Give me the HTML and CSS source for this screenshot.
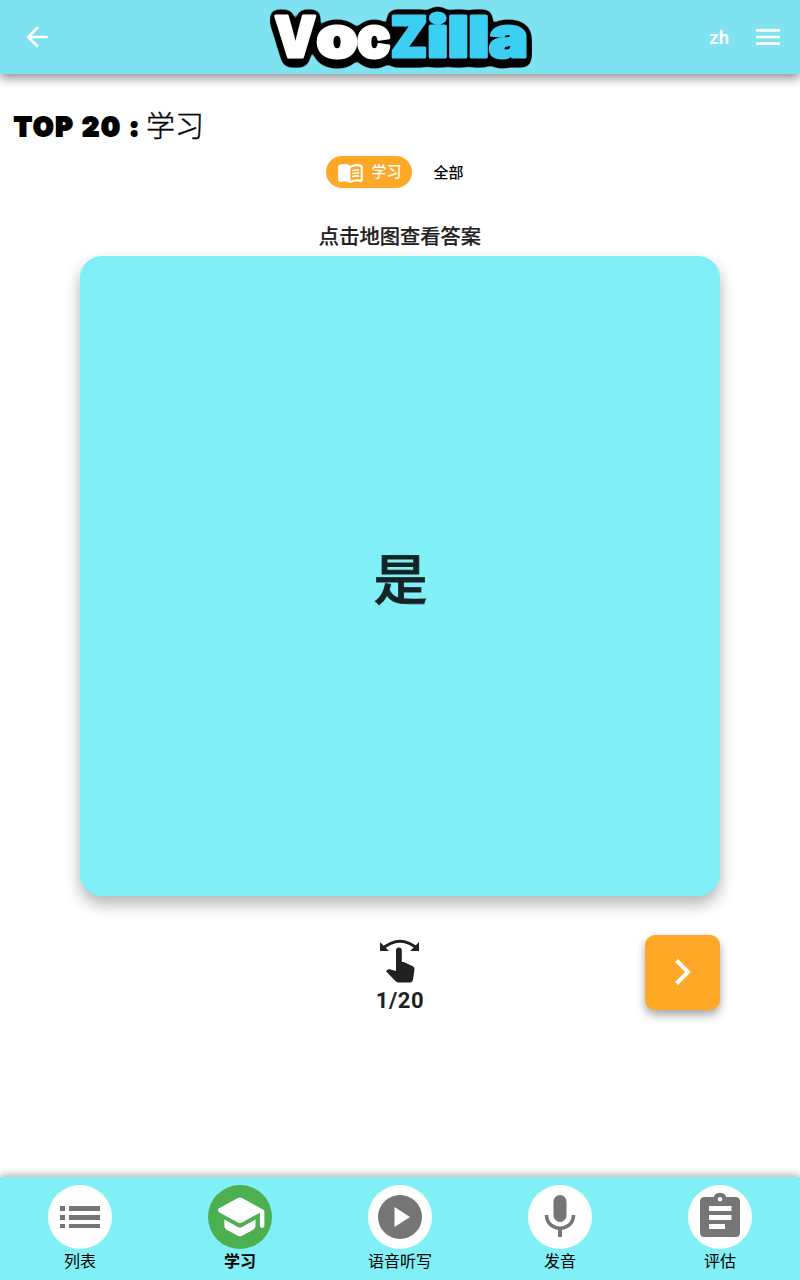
FILE: index.html
```html
<!DOCTYPE html>
<html lang="zh-CN">
<head>
<meta charset="utf-8">
<title>VocZilla</title>
<link rel="stylesheet" href="styles.css">
</head>
<body>
<div class="app">
  <header class="topbar">
    <svg class="back" viewBox="0 0 24 24"><path d="M20 11H7.83l5.59-5.59L12 4l-8 8 8 8 1.41-1.41L7.83 13H20z"/></svg>
    <svg class="logo" viewBox="0 0 280 74">
      <defs>
        <filter id="outline" x="0" y="0" width="280" height="74" filterUnits="userSpaceOnUse" color-interpolation-filters="sRGB">
          <feGaussianBlur in="SourceAlpha" stdDeviation="3.6" result="b"/>
          <feComponentTransfer in="b" result="fat"><feFuncA type="linear" slope="20" intercept="-1"/></feComponentTransfer>
          <feOffset in="fat" dy="4" result="low"/>
          <feOffset in="fat" dy="2" result="mid"/>
          <feMerge><feMergeNode in="low"/><feMergeNode in="mid"/><feMergeNode in="fat"/><feMergeNode in="SourceGraphic"/></feMerge>
        </filter>
      </defs>
      <g class="wordmark" filter="url(#outline)">
        <text class="voc" y="56.500"><tspan x="14.500" textLength="41.500" lengthAdjust="spacingAndGlyphs">V</tspan><tspan x="56.500" textLength="41" lengthAdjust="spacingAndGlyphs">o</tspan><tspan x="97" textLength="33.500" lengthAdjust="spacingAndGlyphs">c</tspan></text>
        <text class="zilla" y="56.500"><tspan x="130.500" textLength="37" lengthAdjust="spacingAndGlyphs">Z</tspan><tspan x="167" textLength="21.500" lengthAdjust="spacingAndGlyphs">i</tspan><tspan x="187.500" textLength="21.500" lengthAdjust="spacingAndGlyphs">l</tspan><tspan x="208" textLength="21.500" lengthAdjust="spacingAndGlyphs">l</tspan><tspan x="229" textLength="39" lengthAdjust="spacingAndGlyphs">a</tspan></text>
      </g>
    </svg>
    <div class="actions">
      <span class="lang">zh</span>
      <svg class="menu" viewBox="0 0 24 16"><path d="M0 0h24v2.67H0zM0 6.67h24v2.67H0zM0 13.33h24V16H0z"/></svg>
    </div>
  </header>

  <main class="content">
    <h1 class="title"><span class="title-latin">TOP 20 :</span><span class="title-cjk">学习</span></h1>
    <div class="tabs">
      <span class="tab tab-active">
        <svg viewBox="0 0 24 24"><path d="M17.5 4.5c-1.95 0-4.05.4-5.5 1.5-1.45-1.1-3.55-1.5-5.5-1.5-1.45 0-2.99.22-4.28.79C1.49 5.62 1 6.33 1 7.14v11.28c0 1.3 1.22 2.26 2.48 1.94.98-.25 2.02-.36 3.02-.36 1.56 0 3.22.26 4.56.92.6.3 1.28.3 1.87 0 1.34-.67 3-.92 4.56-.92 1 0 2.04.11 3.02.36 1.26.33 2.48-.63 2.48-1.94V7.14c0-.81-.49-1.52-1.22-1.85-1.28-.57-2.82-.79-4.27-.79zM21 17.23c0 .63-.58 1.09-1.2.98-.75-.14-1.53-.2-2.3-.2-1.7 0-4.15.65-5.5 1.5V8c1.35-.85 3.8-1.5 5.5-1.5.92 0 1.83.09 2.7.28.46.1.8.51.8.98v9.47z"/><path d="M13.98 11.01c-.32 0-.61-.2-.71-.52-.13-.39.09-.82.48-.94 1.54-.5 3.53-.66 5.36-.45.41.05.71.42.66.83-.05.41-.42.71-.83.66-1.62-.19-3.39-.04-4.73.39-.08.01-.16.03-.23.03zM13.98 13.67c-.32 0-.61-.2-.71-.52-.13-.39.09-.82.48-.94 1.53-.5 3.53-.66 5.36-.45.41.05.71.42.66.83-.05.41-.42.71-.83.66-1.62-.19-3.39-.04-4.73.39-.08.02-.16.03-.23.03zM13.98 16.33c-.32 0-.61-.2-.71-.52-.13-.39.09-.82.48-.94 1.53-.5 3.53-.66 5.36-.45.41.05.71.42.66.83-.05.41-.42.7-.83.66-1.62-.19-3.39-.04-4.73.39-.08.02-.16.03-.23.03z"/></svg>
        学习
      </span>
      <span class="tab">全部</span>
    </div>
    <p class="hint">点击地图查看答案</p>
    <div class="card">是</div>
    <div class="controls">
      <div class="progress">
        <svg class="swipe" viewBox="0 0 40 44"><path d="M1.5 10.5Q20-6 38.500 10.500" fill="none" stroke="#212121" stroke-width="2.900"/><path d="M0 3v9h9zM39 3v9h-9z"/><path d="M16 11.500a2.900 2.900 0 0 1 5.800 0V23h2l9 4.300q2 1.100 1.700 3.200l-1.500 10q-.5 3-3 3H18.500q-1.500 0-2.600-1L6 32.300l1.500-1.500q1-.8 2.200-.5L16 32z"/></svg>
        <span>1/20</span>
      </div>
      <button class="next"><svg viewBox="0 0 18 28"><path d="M2.500 2.500 14 14 2.500 25.500" fill="none" stroke="#fff" stroke-width="4"/></svg></button>
    </div>
  </main>

  <nav class="bottom">
    <a class="item"><span class="disc"><svg viewBox="0 0 64 64"><path d="M12 21h5v5h-5zM12 30h5v5h-5zM12 39h5v4h-5zM21 21h31v5H21zM21 30h31v5H21zM21 39h31v4H21z"/></svg></span><span>列表</span></a>
    <a class="item item-active"><span class="disc"><svg viewBox="0 0 64 64"><g transform="translate(5.300 5.300) scale(2.220)"><path d="M5 13.180v2.810c0 .73.4 1.410 1.040 1.760l5 2.730c.6.330 1.320.330 1.920 0l5-2.730c.64-.35 1.040-1.030 1.040-1.760v-2.810l-6.040 3.300c-.6.330-1.320.330-1.920 0L5 13.180zm6.040-9.660-8.430 4.600c-.69.380-.69 1.380 0 1.760l8.430 4.600c.6.330 1.320.330 1.920 0L21 10.090V16c0 .55.450 1 1 1s1-.45 1-1V9.590c0-.37-.2-.7-.52-.88l-9.520-5.190c-.6-.32-1.320-.32-1.920 0z"/></g></svg></span><span>学习</span></a>
    <a class="item"><span class="disc"><svg viewBox="0 0 64 64"><path fill-rule="evenodd" d="M32 10a22 22 0 1 0 0 44 22 22 0 0 0 0-44zM26.500 22 42 32 26.500 42z"/></svg></span><span>语音听写</span></a>
    <a class="item"><span class="disc"><svg viewBox="0 0 64 64"><rect x="25.500" y="10" width="13" height="27" rx="6.500"/><path d="M18.500 30c0 17.500 27 17.500 27 0" fill="none" stroke="#757575" stroke-width="3.500"/><path d="M30 42h4v10h-4z"/></svg></span><span>发音</span></a>
    <a class="item"><span class="disc"><svg viewBox="0 0 64 64"><path fill-rule="evenodd" d="M16.500 12h9.200a6.800 6.800 0 0 1 12.600 0h9.200q4.500 0 4.500 4.500v31q0 4.500-4.500 4.500h-31q-4.500 0-4.500-4.500v-31q0-4.500 4.500-4.500zM32 12a2.300 2.300 0 1 0 0 4.600 2.300 2.300 0 0 0 0-4.600zM21 21v5h22.500v-5zM21 30v5h22.500v-5zM21 39v5h16v-5z"/></svg></span><span>评估</span></a>
  </nav>
</div>
</body>
</html>
```
FILE: styles.css
```css
* { box-sizing: border-box; }
body { margin: 0; background: #fff; font-family: Roboto, "Noto Sans CJK SC", sans-serif; color: #212121; }
.app { height: 1280px; display: flex; flex-direction: column; overflow: hidden; }
.topbar { height: 74px; flex: none; display: grid; grid-template-columns: 260px 280px 260px; align-items: center; background: #7ee2f0; box-shadow: 0 4px 10px rgba(0,0,0,.45); }
.back { width: 32px; height: 32px; margin-left: 21px; fill: #fff; }
.logo { width: 280px; height: 74px; display: block; }
.wordmark { font-family: Inter, sans-serif; font-weight: 900; font-size: 56px; stroke-width: 3; stroke-linejoin: round; }
.voc { fill: #fff; stroke: #fff; }
.zilla { fill: #3bcff4; stroke: #3bcff4; }
.actions { display: flex; align-items: center; justify-content: flex-end; gap: 27px; padding-right: 20px; }
.lang { color: #fff; font-size: 18.500px; font-weight: 600; line-height: 24px; padding-top: 1px; }
.menu { width: 24px; height: 16px; fill: #fff; }
.content { flex: 1; }
.title { height: 48px; margin: 28px 0 0; padding-left: 14px; display: flex; align-items: center; gap: 7px; color: #000; }
.title-latin { width: 125px; white-space: nowrap; font: 900 26px/40px Inter, sans-serif; letter-spacing: 2.200px; -webkit-text-stroke: 1.800px #000; padding-top: 1px; }
.title-cjk { font: 300 29px/44px "Noto Sans CJK SC", sans-serif; -webkit-text-stroke: .4px #000; padding-bottom: 4px; }
.tabs { display: flex; justify-content: center; align-items: center; height: 32px; margin-top: 6px; }
.tab { height: 32px; padding: 1px 11px 0; display: flex; align-items: center; gap: 8px; font-size: 15px; line-height: 22px; font-weight: 500; color: #000; }
.tab-active { background: #ffa726; color: #fff; border-radius: 16px; padding: 0 10px 0 11px; margin-right: 11px; margin-left: 1px; }
.tab svg { width: 27px; height: 27px; fill: #fff; margin-right: -1px; }
.hint { margin: 33px 0 0; height: 34.500px; line-height: 33px; text-align: center; font-size: 20.300px; font-weight: 500; -webkit-text-stroke: .2px #212121; }
.card { width: 640px; height: 640px; margin: 0 auto; border-radius: 22px; background: #80eff6; box-shadow: 0 8px 16px rgba(0,0,0,.3); display: flex; align-items: center; justify-content: center; padding: 12px 0 0 1px; font-size: 54px; font-weight: 500; line-height: 64px; color: #132427; -webkit-text-stroke: .8px #132427; }
.controls { display: grid; grid-template-columns: 1fr 100px 1fr; width: 640px; margin: 39.500px auto 0; }
.progress { grid-column: 2; display: flex; flex-direction: column; align-items: center; padding-top: 4px; font-size: 22px; font-weight: 700; line-height: 30px; letter-spacing: .6px; }
.swipe { width: 40px; height: 44px; fill: #212121; margin-bottom: 3px; }
.next { justify-self: end; width: 75px; height: 74.500px; padding: 0; border: 0; border-radius: 10px; background: #ffa726; display: flex; align-items: center; justify-content: center; box-shadow: 0 5px 10px rgba(0,0,0,.35); }
.next svg { width: 18px; height: 28px; }
.bottom { flex: none; height: 102.600px; display: grid; grid-template-columns: repeat(5, 1fr); background: #80eff6; box-shadow: 0 -2px 8px rgba(0,0,0,.32); }
.item { display: flex; flex-direction: column; align-items: center; padding-top: 8px; color: #000; font-size: 16px; line-height: 26px; }
.item-active { font-weight: 700; }
.disc { width: 64px; height: 64px; border-radius: 50%; background: #fff; }
.disc svg { display: block; width: 64px; height: 64px; fill: #757575; }
.item-active .disc { background: #4caf50; }
.item-active svg { fill: #fff; }
```
